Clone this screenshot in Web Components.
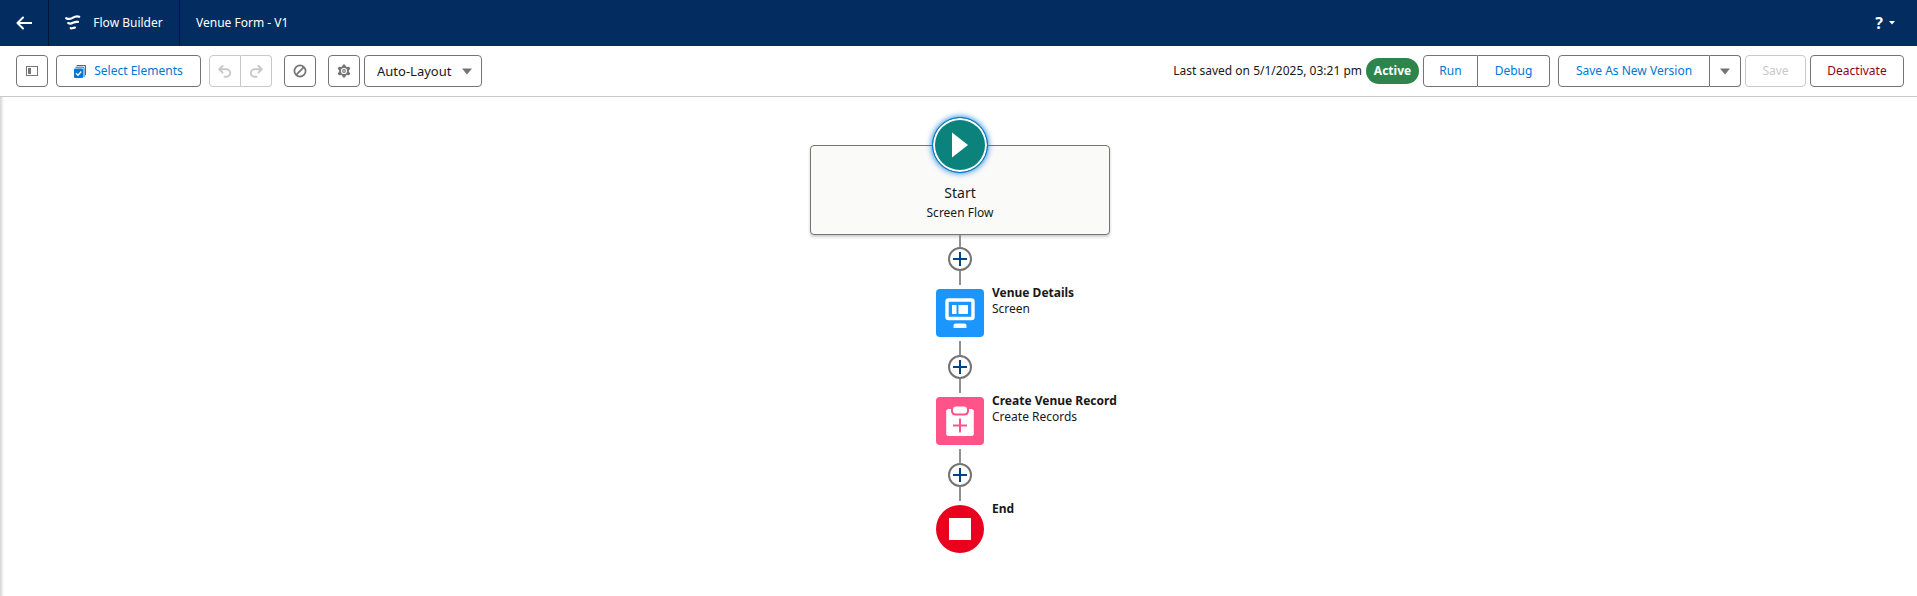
<!DOCTYPE html>
<html lang="en">
<head>
<meta charset="utf-8">
<title>Flow Builder</title>
<style>
html,body{height:100%}
body{margin:0;font:12px/16px "Noto Sans","Open Sans",sans-serif;color:#181818;background:#fff}
</style>
</head>
<body>
<flow-app></flow-app>
<script>
const icons = {
  back: '<svg width="16" height="14" viewBox="0 0 16 14" fill="none" stroke="#fff" stroke-width="2"><path d="M1.5 7H16M7 1.5L1.5 7L7 12.5" stroke-linecap="round" stroke-linejoin="round"/></svg>',
  flow: '<svg width="16" height="16" viewBox="0 0 16 16" fill="none" stroke="#fff" stroke-linecap="round"><path d="M1.200 3.200C3.500 4.600 5.500 4 7.500 2.900C9.500 1.700 11.500 1 14.200 1.700" stroke-width="2.200"/><path d="M3.200 8.100C5 9 6.500 8.600 8 7.800C9.500 7 11 6.500 13 6.900" stroke-width="2.200"/><path d="M5.700 13.200C7.200 13.700 8.200 12.600 10 12.600" stroke-width="2.200"/></svg>',
  panel: '<svg width="12" height="10" viewBox="0 0 12 10"><rect x=".5" y=".5" width="11" height="9" fill="#fff" stroke="#747474"/><path d="M2 2h3v6H2z" fill="#747474"/></svg>',
  select: '<svg width="12" height="13" viewBox="0 0 12 13"><path d="M3.500 0H11a1 1 0 0 1 1 1v8.500a1 1 0 0 1-1 1V2a1 1 0 0 0-1-1H2.500a1 1 0 0 1 1-1Z" fill="#0176d3"/><path d="M1.500 2.200H9a1 1 0 0 1 1 1V12" fill="none" stroke="#0176d3"/><rect y="3.500" width="9" height="9.500" rx="1" fill="#0176d3"/><path d="M2 8.300l2 2L7.300 6.500" fill="none" stroke="#fff" stroke-width="1.300"/></svg>',
  undo: '<svg width="14" height="13" viewBox="0 0 14 13" fill="none" stroke="#c9c9c9" stroke-width="2"><path d="M4.500 1L1.200 4.300L4.500 7.600M1.200 4.300H8.500A3.700 3.700 0 0 1 8.500 11.700H6.500" stroke-linecap="round" stroke-linejoin="round"/></svg>',
  redo: '<svg width="14" height="13" viewBox="0 0 14 13" fill="none" stroke="#c9c9c9" stroke-width="2"><path d="M9.500 1L12.800 4.300L9.500 7.600M12.800 4.300H5.500A3.700 3.700 0 0 0 5.500 11.700H7.500" stroke-linecap="round" stroke-linejoin="round"/></svg>',
  ban: '<svg width="14" height="14" viewBox="0 0 14 14" fill="none" stroke="#747474" stroke-width="1.700"><circle cx="7" cy="7" r="5.600"/><path d="M3.200 10.800L10.800 3.200"/></svg>',
  gear: '<svg width="14" height="14" viewBox="0 0 14 14"><path d="M5.900.4h2.200l.7 2 1.300.7 2.100-.4 1.100 1.900L11.900 6.200v1.600l1.400 1.600-1.100 1.900-2.100-.4-1.300.7-.7 2H5.900l-.7-2-1.300-.7-2.100.4L.7 9.400l1.400-1.600V6.200L.7 4.600l1.100-1.900 2.100.4 1.300-.7Z" fill="#747474"/><circle cx="7" cy="7" r="3.100" fill="#fff"/><circle cx="7" cy="7" r="1.900" fill="#747474"/><circle cx="7" cy="7" r=".8" fill="#fff"/></svg>',
  caret: '<svg width="10" height="7" viewBox="0 0 10 7"><path d="M0 .5h10L5 6.500Z" fill="#747474"/></svg>',
  help: '<svg width="6" height="4" viewBox="0 0 6 4"><path d="M0 0h6L3 3.500Z" fill="#fff"/></svg>',
  play: '<svg width="16" height="26" viewBox="0 0 16 26"><path d="M0 .5L16 13L0 25.500Z" fill="#fff"/></svg>',
  screen: '<svg width="48" height="48" viewBox="0 0 48 48"><rect width="48" height="48" rx="4" fill="#1b96ff"/><rect x="11" y="11" width="26" height="18.500" rx="1.500" fill="none" stroke="#fff" stroke-width="3.400"/><path d="M16 16h4.500v9H16zM22.500 16H32v9h-9.500zM19.500 34.500h9a2 2 0 0 1 2 2V39h-13v-2.500a2 2 0 0 1 2-2Z" fill="#fff"/></svg>',
  record: '<svg width="48" height="48" viewBox="0 0 48 48"><rect width="48" height="48" rx="4" fill="#ff538a"/><rect x="10.200" y="12" width="27.600" height="27" rx="2.500" fill="#fff"/><path d="M15 10h18v4a4.500 4.500 0 0 1-4.500 4.500h-9A4.500 4.500 0 0 1 15 14Z" fill="#ff538a"/><rect x="17" y="9.500" width="14" height="7" rx="3" fill="#fff"/><path d="M24 21.500v14M17 28.500h14" stroke="#ff538a" stroke-width="2"/></svg>',
  end: '<svg width="48" height="48" viewBox="0 0 48 48"><circle cx="24" cy="24" r="24" fill="#ea001e"/><path d="M13 13h22v22H13z" fill="#fff"/></svg>',
  plus: '<svg width="14" height="14" viewBox="0 0 14 14"><path d="M7 0v14M0 7h14" stroke="#014486" stroke-width="2"/></svg>'
};
function define(name, css, html) {
  customElements.define(name, class extends HTMLElement {
    connectedCallback() {
      if (this.shadowRoot) return;
      const markup = typeof html === 'function' ? html(this) : html;
      this.attachShadow({mode: 'open'}).innerHTML = '<style>*{box-sizing:border-box}svg{display:block;flex:none}' + css + '</style>' + markup;
    }
  });
}
define('flow-icon', ':host{display:block;flex:none}', el => icons[el.getAttribute('name')]);

define('tool-button', `
:host{display:block;flex:none;width:var(--w,32px);height:32px}
button{display:flex;align-items:center;justify-content:center;gap:8px;width:100%;height:100%;padding:0;font:inherit;color:#0176d3;background:#fff;border:1px solid #747474;border-radius:4px;white-space:nowrap}
button:disabled{color:#c9c9c9;border-color:#c9c9c9}
:host([danger]) button{color:#8e030f}
:host([join=start]) button{border-radius:4px 0 0 4px}
:host([join=end]) button{border-radius:0 4px 4px 0;border-left:0}`,
el => `<button type="button" ${el.hasAttribute('off') ? 'disabled' : ''} aria-label="${el.getAttribute('label') || el.textContent.trim()}"><slot></slot></button>`);

define('layout-picker', `
:host{display:grid;flex:none;width:118px;height:32px;align-items:center}
select{grid-area:1/1;width:100%;height:100%;appearance:none;font:inherit;font-size:13px;color:#181818;background:#fff;border:1px solid #747474;border-radius:4px;padding:0 28px 0 12px}
flow-icon{grid-area:1/1;justify-self:end;margin-right:10px;pointer-events:none}`,
`<select aria-label="Layout mode"><option>Auto-Layout</option><option>Free-Form</option></select><flow-icon name="caret"></flow-icon>`);

define('app-header', `
:host{display:flex;height:46px;background:#032d60;color:#fff}
a,button,.app{display:flex;align-items:center;justify-content:center;color:inherit;text-decoration:none;font:inherit;background:none;border:0;padding:0}
.back{width:49px;border-right:1px solid #001639}
.app{gap:12px;width:131px;border-right:1px solid #001639}
h1{margin:0;padding:0 16px;font:inherit;align-self:center;flex:1}
.help{gap:6px;padding:0 22px;font-size:16px;font-weight:700}`,
`<a class="back" href="#" aria-label="Back"><flow-icon name="back"></flow-icon></a>
<div class="app"><flow-icon name="flow"></flow-icon><span>Flow Builder</span></div>
<h1>Venue Form - V1</h1>
<button class="help" type="button"><span>?</span><flow-icon name="help"></flow-icon></button>`);

define('app-toolbar', `
:host{display:flex;align-items:center;justify-content:space-between;height:51px;padding:0 13px 0 16px;border-bottom:1px solid #c9c9c9}
.set{display:flex;align-items:center}
.left>:not(:last-child){margin-right:8px}
.left>.wide:not(:last-child){margin-right:12px}
.left>.near:not(:last-child){margin-right:4px}
.right{gap:4px}
.group{display:flex}
.gap{margin-right:4px}
.badge{width:53px;height:26px;line-height:26px;border-radius:13px;background:#2e844a;color:#fff;text-align:center;font-weight:700}`,
`<div class="set left">
<tool-button label="Toggle toolbox"><flow-icon name="panel"></flow-icon></tool-button>
<tool-button style="--w:145px"><flow-icon name="select"></flow-icon>Select Elements</tool-button>
<div class="group wide"><tool-button off join="start" label="Undo"><flow-icon name="undo"></flow-icon></tool-button><tool-button off join="end" label="Redo" style="--w:31px"><flow-icon name="redo"></flow-icon></tool-button></div>
<tool-button class="wide" label="Show errors"><flow-icon name="ban"></flow-icon></tool-button>
<tool-button class="near" label="Settings"><flow-icon name="gear"></flow-icon></tool-button>
<layout-picker></layout-picker>
</div>
<div class="set right">
<span>Last saved on 5/1/2025, 03:21 pm</span><span class="badge">Active</span>
<div class="group gap"><tool-button join="start" style="--w:55px">Run</tool-button><tool-button join="end" style="--w:72px">Debug</tool-button></div>
<div class="group"><tool-button join="start" style="--w:152px">Save As New Version</tool-button><tool-button join="end" style="--w:31px" label="More save options"><flow-icon name="caret"></flow-icon></tool-button></div>
<tool-button off style="--w:61px">Save</tool-button>
<tool-button danger style="--w:94px">Deactivate</tool-button>
</div>`);

define('start-node', `
:host{display:grid;justify-items:center;width:300px}
.dot{grid-area:1/1;z-index:1;display:flex;align-items:center;justify-content:center;width:56px;height:56px;border-radius:50%;background:#0b827c;border:1px solid #0176d3;box-shadow:inset 0 0 0 2px #fff,0 0 6px #0176d3}
.card{grid-area:1/1;width:100%;height:90px;margin-top:28px;padding-top:37px;text-align:center;background:#fafaf9;border:1px solid #747474;border-radius:4px;box-shadow:0 2px 3px #0003}
b{display:block;font-weight:400;font-size:14px;line-height:20px}
span{display:block;line-height:20px}`,
`<div class="card"><b>Start</b><span>Screen Flow</span></div><div class="dot"><flow-icon name="play"></flow-icon></div>`);

define('add-connector', `
:host{display:flex;flex-direction:column;align-items:center}
i{width:2px;height:14px;background:#919191}
:host([first]) i:first-of-type{height:12px}
button{display:flex;align-items:center;justify-content:center;width:24px;height:24px;padding:0;border:2px solid #747474;border-radius:50%;background:#fff}`,
`<i></i><button type="button" aria-label="Add element"><flow-icon name="plus"></flow-icon></button><i></i>`);

define('flow-node', `
:host{display:grid;grid-template-columns:1fr 48px 1fr;column-gap:8px;width:100%;height:48px;margin:4px 0}
flow-icon{grid-column:2}
p{margin:-4px 0 0;white-space:nowrap}
b,span{display:block}`,
el => `<flow-icon name="${el.getAttribute('icon')}"></flow-icon><p><b><slot></slot></b><span>${el.getAttribute('kind') || ''}</span></p>`);

define('flow-canvas', `
:host{display:flex;flex-direction:column;align-items:center;flex:1;padding:20px 0 0 3px;background:linear-gradient(90deg,#d4d4d4,#fff 4px)}`,
`<start-node></start-node><add-connector first></add-connector>
<flow-node icon="screen" kind="Screen">Venue Details</flow-node><add-connector></add-connector>
<flow-node icon="record" kind="Create Records">Create Venue Record</flow-node><add-connector></add-connector>
<flow-node icon="end">End</flow-node>`);

define('flow-app', ':host{display:flex;flex-direction:column;min-height:100%}', '<app-header></app-header><app-toolbar></app-toolbar><flow-canvas></flow-canvas>');
</script>
</body>
</html>
